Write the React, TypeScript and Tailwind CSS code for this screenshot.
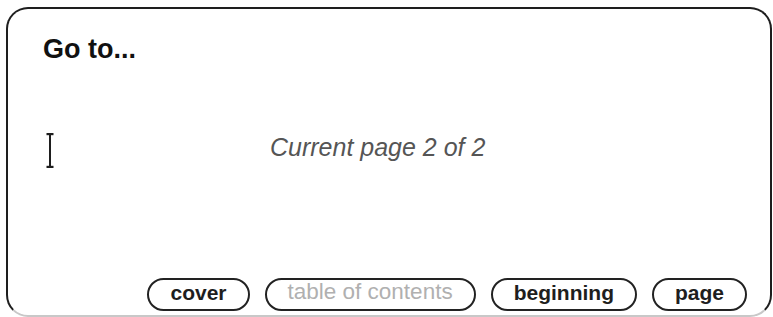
import React from "react";

function Cursor() {
  return (
    <svg width="8" height="35" viewBox="0 0 8 35" className="block shrink-0">
      <rect x="3" y="1" width="2" height="33" fill="#1e1e1e" />
      <rect x="0.5" y="0" width="7" height="2.2" fill="#1e1e1e" />
      <rect x="0.5" y="32.8" width="7" height="2.2" fill="#1e1e1e" />
    </svg>
  );
}

function Btn({ children, disabled }: { children: React.ReactNode; disabled?: boolean }) {
  return (
    <div className="h-[33px] border-2 border-[#222] rounded-full px-[21px] pb-[5px] flex items-center bg-white">
      <span
        className={
          disabled
            ? "text-[22.5px] leading-none font-normal text-[#b0b0b0] whitespace-nowrap"
            : "text-[21px] leading-none font-bold text-[#1e1e1e] whitespace-nowrap"
        }
      >
        {children}
      </span>
    </div>
  );
}

export default function App() {
  return (
    <div className="w-[773px] h-[317px] bg-white pt-[7px] pl-[6px] overflow-hidden font-['Liberation_Sans',Arial,sans-serif]">
      <div className="w-[766px] h-[310px] border-2 border-[#1e1e1e] border-b-[#c8c8c8] rounded-[22px] flex flex-col bg-white">
        <div className="pt-[27px] pl-[35px] text-[27px] leading-none font-bold text-[#111]">Go to...</div>
        <div className="flex items-start mt-[70px] pl-[38px]">
          <Cursor />
          <div className="ml-[216px] mt-[2px] text-[25px] leading-none italic text-[#555]">
            Current page 2 of 2
          </div>
        </div>
        <div className="mt-auto pb-[4px] pr-[23px] flex justify-end gap-[15px]">
          <Btn>cover</Btn>
          <Btn disabled>table of contents</Btn>
          <Btn>beginning</Btn>
          <Btn>page</Btn>
        </div>
      </div>
    </div>
  );
}
